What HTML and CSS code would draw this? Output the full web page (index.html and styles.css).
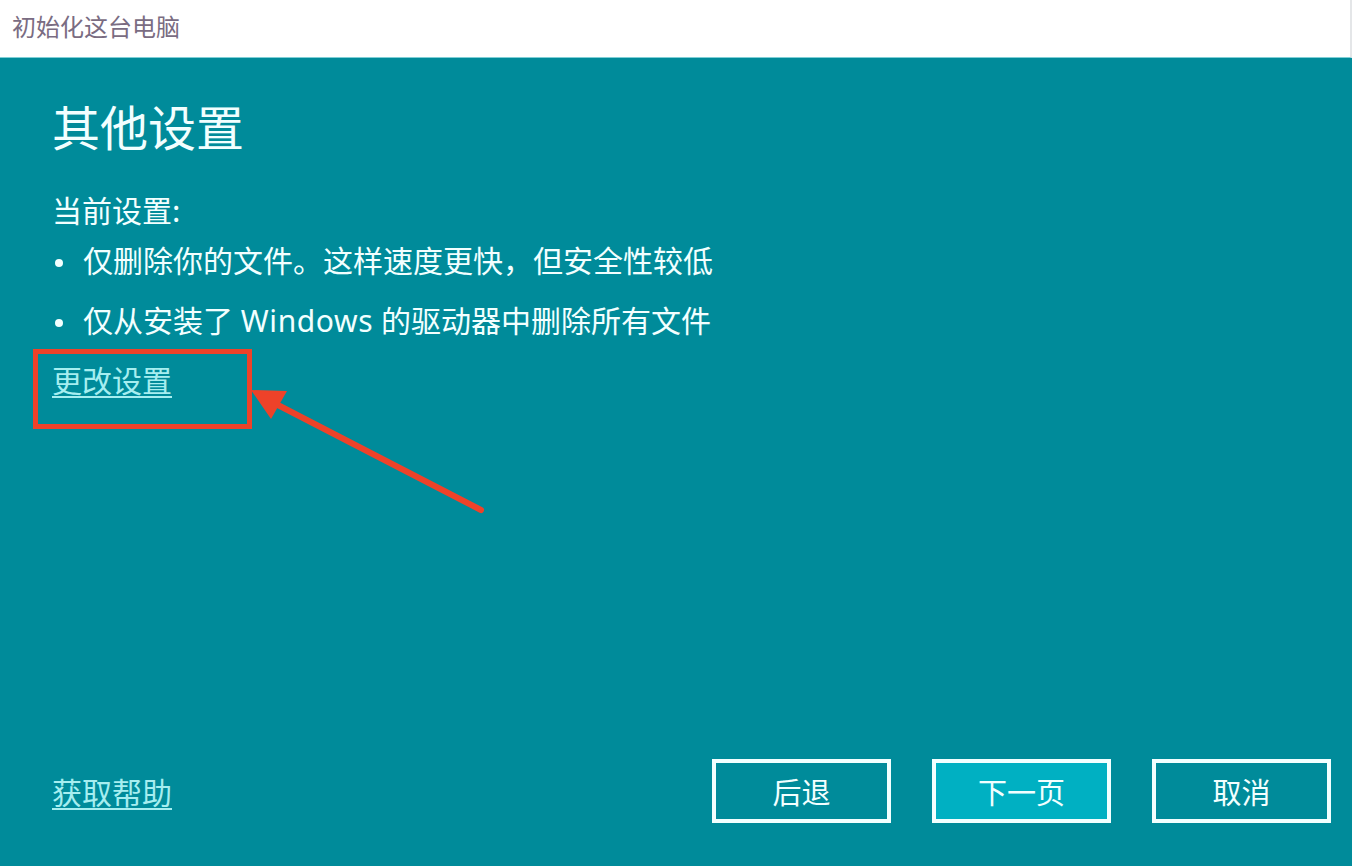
FILE: index.html
```html
<!DOCTYPE html>
<html lang="zh-CN">
<head>
<meta charset="utf-8">
<title>初始化这台电脑</title>
<link rel="stylesheet" href="styles.css">
</head>
<body>
<div class="window">
  <header class="titlebar">初始化这台电脑</header>
  <main class="panel">
    <section class="content">
      <h1 class="heading">其他设置</h1>
      <p class="current">当前设置:</p>
      <ul class="settings">
        <li>仅删除你的文件。这样速度更快，但安全性较低</li>
        <li>仅从安装了 <span class="latin">Windows</span> 的驱动器中删除所有文件</li>
      </ul>
      <a class="link change" href="#">更改设置</a>
    </section>
    <footer class="footer">
      <a class="link" href="#">获取帮助</a>
      <div class="buttons">
        <button class="btn">后退</button>
        <button class="btn primary">下一页</button>
        <button class="btn">取消</button>
      </div>
    </footer>
  </main>
  <div class="callout-box"></div>
  <svg class="callout-arrow" width="1352" height="866" viewBox="0 0 1352 866">
    <line x1="481" y1="510" x2="274" y2="403" stroke="#ee4229" stroke-width="6" stroke-linecap="round"/>
    <polygon points="251,390 287,391 271,419" fill="#ee4229"/>
  </svg>
</div>
</body>
</html>
```

FILE: styles.css
```css
* { box-sizing: border-box; }

html, body {
  margin: 0;
  padding: 0;
}

body {
  width: 1352px;
  height: 866px;
  overflow: hidden;
  font-family: "Noto Sans", "Noto Sans CJK SC", sans-serif;
  background: #008b9a;
}

.window {
  position: relative;
  width: 1352px;
  height: 866px;
  display: flex;
  flex-direction: column;
}

.titlebar {
  height: 58px;
  flex: none;
  background: #ffffff;
  border-bottom: 1px solid #7fcfd6;
  border-right: 2px solid #e4e6e8;
  padding-left: 12px;
  line-height: 52px;
  font-size: 24px;
  color: #7a6c82;
  font-family: "Noto Sans CJK SC", sans-serif;
}

.panel {
  flex: 1;
  display: flex;
  flex-direction: column;
  padding: 0 21px 43px 52px;
  color: #f2ffff;
}

.content {
  display: flex;
  flex-direction: column;
  align-items: flex-start;
}

.heading {
  margin: 37px 0 0;
  font-size: 48px;
  line-height: 60px;
  font-weight: 400;
  font-family: "Noto Sans CJK SC", sans-serif;
}

.current {
  margin: 34px 0 0;
  font-size: 30px;
  line-height: 40px;
  font-family: "Noto Sans CJK SC", sans-serif;
}

.settings {
  margin: 2px 0 0;
  padding: 0;
  list-style: none;
}

.settings li {
  position: relative;
  padding-left: 31px;
  font-size: 30px;
  line-height: 60px;
}

.settings li::before {
  content: "";
  position: absolute;
  left: 3px;
  top: 28px;
  width: 8px;
  height: 8px;
  border-radius: 50%;
  background: #f2ffff;
}

.latin {
  letter-spacing: 0.6px;
}

.link {
  color: #a6eef0;
  font-size: 30px;
  line-height: 60px;
  text-decoration: underline;
  text-decoration-thickness: 2px;
  text-underline-offset: 4px;
  font-family: "Noto Sans CJK SC", sans-serif;
}

.change {
  margin-top: -2px;
}

.footer {
  margin-top: auto;
  display: flex;
  align-items: center;
  justify-content: space-between;
}

.buttons {
  display: flex;
  gap: 41px;
}

.btn {
  width: 179px;
  height: 64px;
  border: 4px solid #f2ffff;
  background: #008b9a;
  color: #f2ffff;
  font-size: 29px;
  font-family: "Noto Sans CJK SC", sans-serif;
  padding: 0;
}

.btn.primary {
  background: #00b0c2;
}

.callout-box {
  position: absolute;
  left: 33px;
  top: 349px;
  width: 219px;
  height: 80px;
  border: 5px solid #ee4229;
}

.callout-arrow {
  position: absolute;
  left: 0;
  top: 0;
  pointer-events: none;
}
```
